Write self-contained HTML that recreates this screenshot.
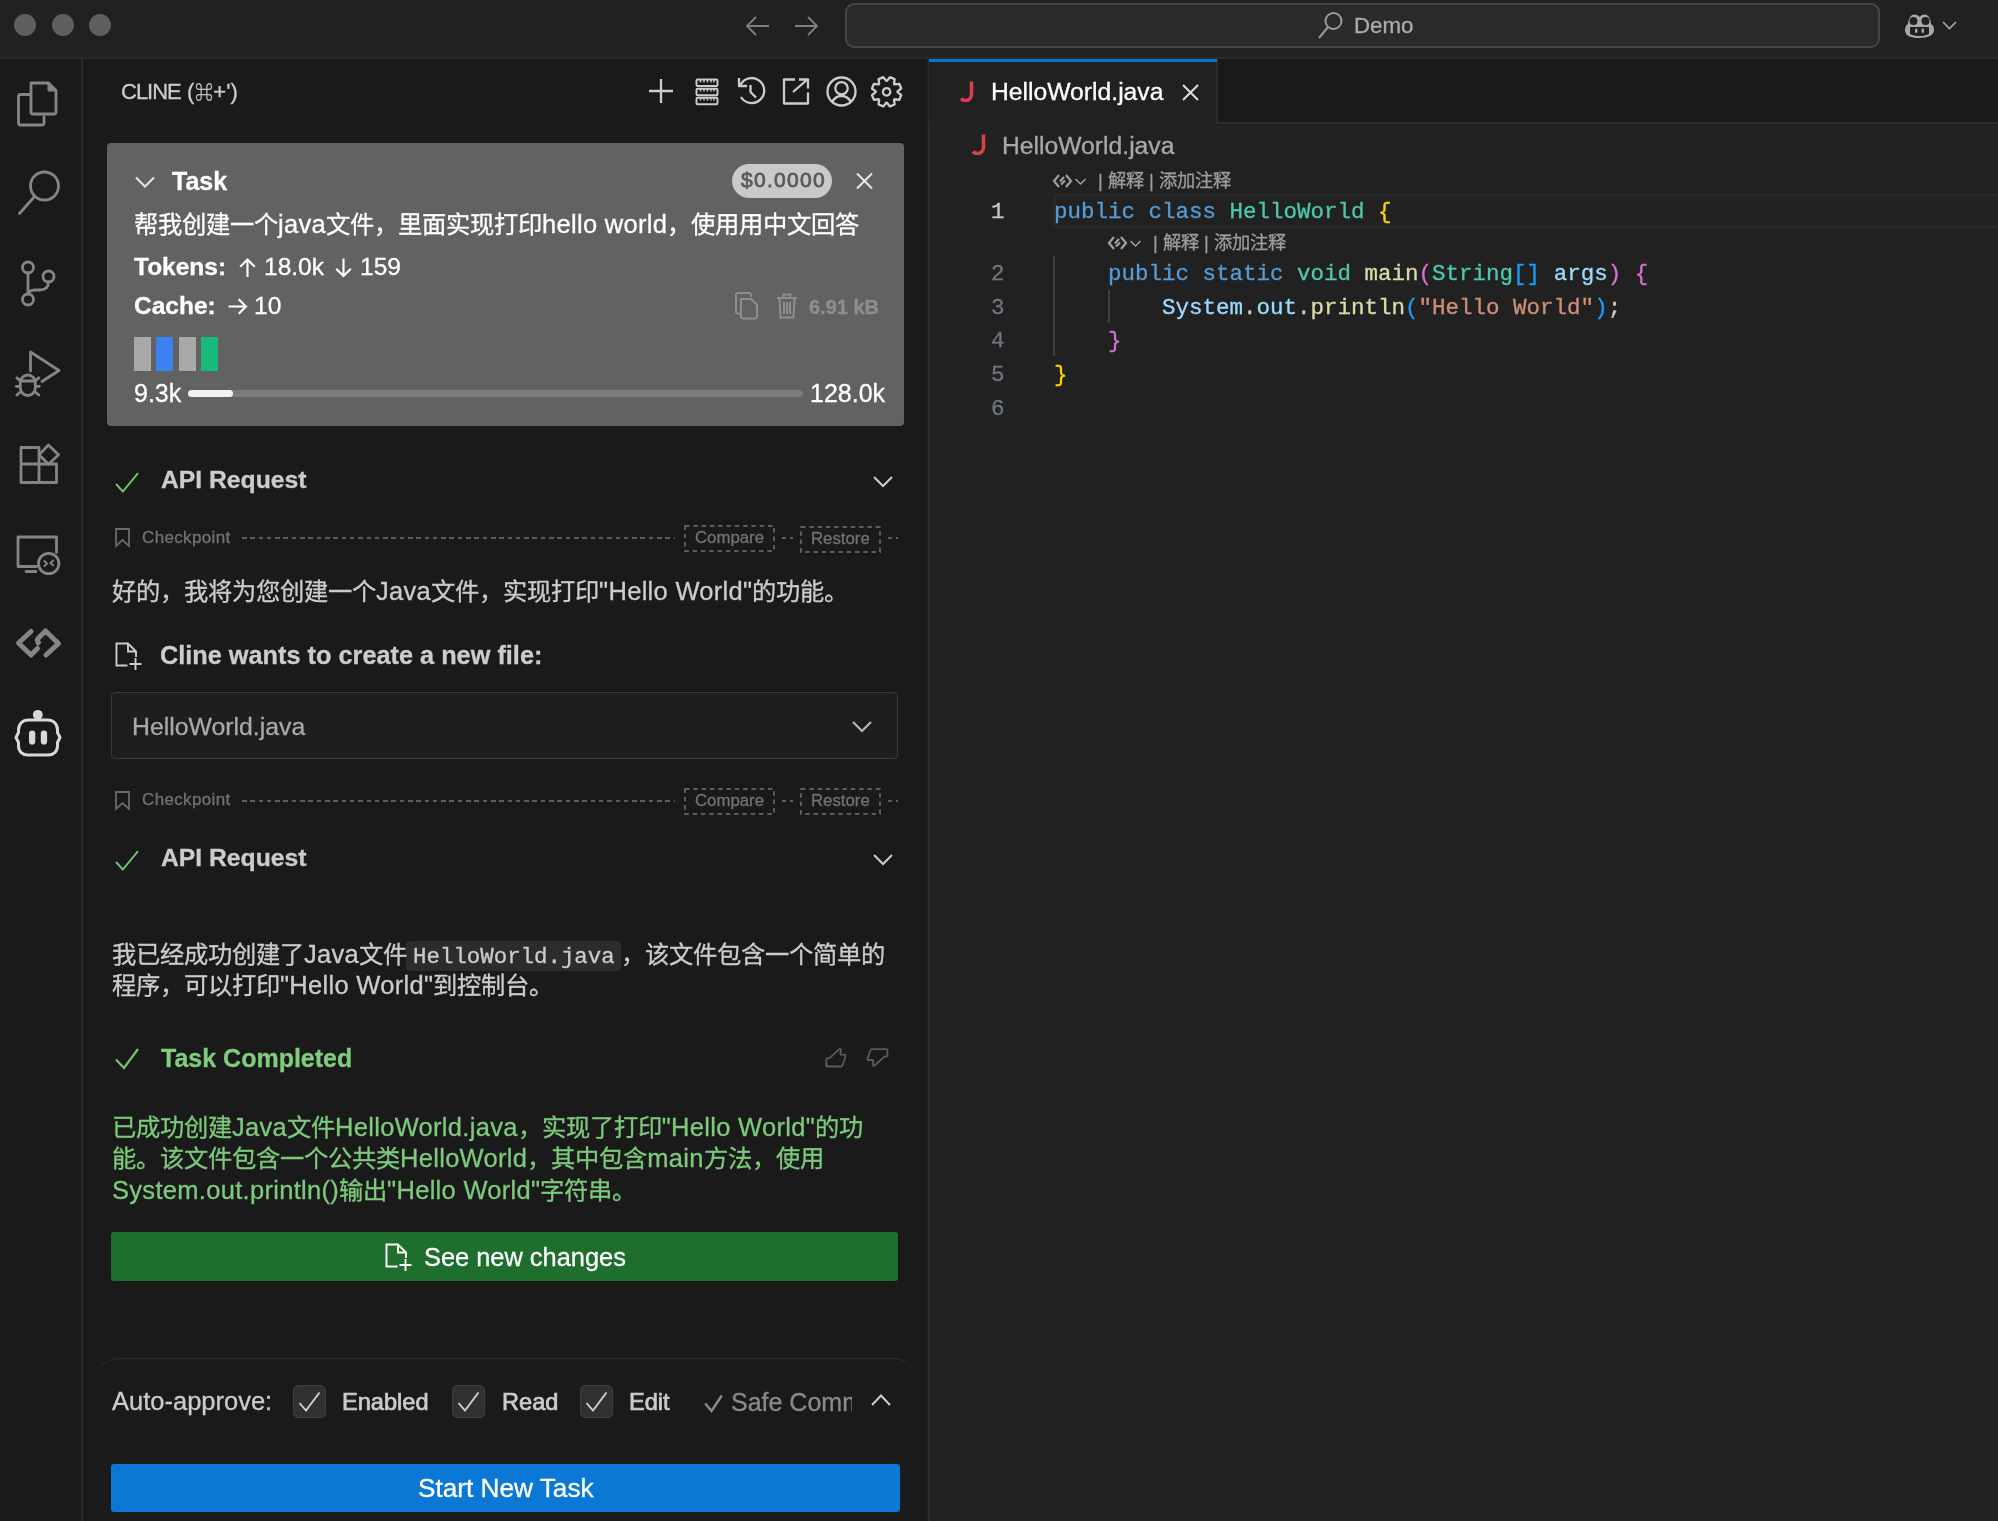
<!DOCTYPE html>
<html lang="zh-CN"><head><meta charset="utf-8">
<style>
*{margin:0;padding:0;box-sizing:border-box}
html,body{width:1998px;height:1521px;overflow:hidden;background:#212121}
body{position:relative;font-family:"Liberation Sans",sans-serif;color:#cccccc}
.a{position:absolute}
.t{position:absolute;white-space:pre;line-height:1;-webkit-text-stroke:0.3px currentColor;will-change:transform}
.mono{font-family:"Liberation Mono",monospace}
svg{position:absolute;overflow:visible}
</style></head><body>

<div class="a" style="left:0px;top:0px;width:1998px;height:57px;background:#212121;"></div>
<div class="a" style="left:0px;top:57px;width:1998px;height:2px;background:#2b2b2b;"></div>
<div class="a" style="left:14px;top:14px;width:22px;height:22px;border-radius:50%;background:#5f5f5f"></div>
<div class="a" style="left:51.5px;top:14px;width:22px;height:22px;border-radius:50%;background:#5f5f5f"></div>
<div class="a" style="left:89px;top:14px;width:22px;height:22px;border-radius:50%;background:#5f5f5f"></div>
<svg style="left:745px;top:15px" width="26" height="22" viewBox="0 0 26 22"><path d="M24 11H2M11 2L2 11l9 9" fill="none" stroke="#808080" stroke-width="1.8"/></svg>
<svg style="left:793px;top:15px" width="26" height="22" viewBox="0 0 26 22"><path d="M2 11h22M15 2l9 9-9 9" fill="none" stroke="#808080" stroke-width="1.8"/></svg>
<div class="a" style="left:845px;top:3px;width:1035px;height:45px;border:2px solid #464646;border-radius:9px;background:#2a2a2a"></div>
<svg style="left:1318px;top:12px" width="25" height="27" viewBox="0 0 25 27"><circle cx="15.5" cy="9" r="8" fill="none" stroke="#9a9a9a" stroke-width="2"/><path d="M10 15L1 26" stroke="#9a9a9a" stroke-width="2"/></svg>
<div class="t" style="left:1353.5px;top:15.1px;font-size:22.3px;color:#ababab;">Demo</div>
<svg style="left:1904px;top:12px" width="31" height="27" viewBox="0 0 31 27"><path d="M4 12c0-3 1-5 2-7 2-3 5-3 7-2 1 1 2 1 2.5 2 .5-1 1.5-1 2.5-2 2-1 5-1 7 2 1 2 2 4 2 7 2 1 3 3 3 6 0 5-6 8-14.5 8S1 24 1 18c0-3 1-5 3-6z" fill="#a8a8a8"/><ellipse cx="9.5" cy="9" rx="4" ry="4" fill="#212121"/><ellipse cx="21.5" cy="9" rx="4" ry="4" fill="#212121"/><path d="M6 15h19v7c-3 1.5-6 2-9.5 2S9 23.5 6 22z" fill="#212121"/><rect x="11" y="16.5" width="2.4" height="4.5" rx="1.2" fill="#a8a8a8"/><rect x="17.6" y="16.5" width="2.4" height="4.5" rx="1.2" fill="#a8a8a8"/></svg>
<svg style="left:1942px;top:21px" width="15" height="9" viewBox="0 0 15 9"><path d="M1 1l6.5 6.5L14 1" fill="none" stroke="#a8a8a8" stroke-width="1.6"/></svg>
<div class="a" style="left:0px;top:59px;width:81px;height:1462px;background:#1a1a1a;"></div>
<div class="a" style="left:81px;top:59px;width:2px;height:1462px;background:#2b2b2b;"></div>
<svg style="left:0;top:0" width="82" height="800" viewBox="0 0 82 800"><path d="M31 83h17.5l7.5 7.5V112a2 2 0 0 1-2 2H33a2 2 0 0 1-2-2z" fill="none" stroke="#858585" stroke-width="2.8" stroke-linejoin="round" stroke-linecap="round"/><path d="M48.5 83v7.5h7.5z" fill="#858585" stroke="#858585" stroke-width="2" stroke-linejoin="round"/><path d="M31 94.5H20.5a2 2 0 0 0-2 2V123a2 2 0 0 0 2 2H42a2 2 0 0 0 2-2v-6.5" fill="none" stroke="#858585" stroke-width="2.8" stroke-linejoin="round" stroke-linecap="round"/><circle cx="44.5" cy="186" r="14" fill="none" stroke="#858585" stroke-width="2.8" stroke-linejoin="round" stroke-linecap="round"/><path d="M34.5 196.5L19.5 213.5" fill="none" stroke="#858585" stroke-width="2.8" stroke-linejoin="round" stroke-linecap="round"/><circle cx="28" cy="267.5" r="5.5" fill="none" stroke="#858585" stroke-width="2.8" stroke-linejoin="round" stroke-linecap="round"/><circle cx="28" cy="299.5" r="5.5" fill="none" stroke="#858585" stroke-width="2.8" stroke-linejoin="round" stroke-linecap="round"/><circle cx="48.5" cy="276.5" r="5.5" fill="none" stroke="#858585" stroke-width="2.8" stroke-linejoin="round" stroke-linecap="round"/><path d="M28 273v21 M48.5 282c0 5-3 8-9 8h-5c-4 0-6 2-6 4" fill="none" stroke="#858585" stroke-width="2.8" stroke-linejoin="round" stroke-linecap="round"/><path d="M30.5 371V352l28.5 18.5-17 11" fill="none" stroke="#858585" stroke-width="2.8" stroke-linejoin="round" stroke-linecap="round"/><path d="M20.3 382.5a7.5 7.5 0 0 1 15 0v5.5a7.5 7.5 0 0 1-15 0z M21 381h13.6 M16.3 386.3h3.8 M35.5 386.3h3.8 M16.8 377.8l3.6 3 M38.8 377.8l-3.6 3 M16.8 395l3.6-3 M38.8 395l-3.6-3" fill="none" stroke="#858585" stroke-width="2.8" stroke-linejoin="round" stroke-linecap="round"/><path d="M21 447.5h18v35H21z M21 464h35.5v18.5H39" fill="none" stroke="#858585" stroke-width="2.8" stroke-linejoin="round" stroke-linecap="round"/><path d="M48.4 445l10.2 9.7-10.2 9.5-9.3-9.5z" fill="none" stroke="#858585" stroke-width="2.8" stroke-linejoin="round" stroke-linecap="round"/><path d="M36.5 566.5H18V537H56.5V552.5 M26 571.5h10" fill="none" stroke="#858585" stroke-width="2.8" stroke-linejoin="round" stroke-linecap="round"/><circle cx="48.7" cy="563.5" r="10.2" fill="none" stroke="#858585" stroke-width="2.8" stroke-linejoin="round" stroke-linecap="round"/><path d="M43.8 560.5l3.3 3-3.3 3 M53.8 560l-3.3 3 3.3 3" fill="none" stroke="#858585" stroke-width="1.8"/><path d="M31 631.5l-12.5 11.5 12.5 12 M45.5 631l13 12.5-12.5 11.5 M45.5 631l-7 7c-1.5 1.5-1.5 3 0 4.5l-0.5 0.5 M31 655l6.5-6.5" fill="none" stroke="#858585" stroke-width="5" stroke-linejoin="round" stroke-linecap="round"/><circle cx="37.8" cy="714.8" r="4.9" fill="#d8d8d8"/><path d="M28.5 720h19c6 0 10 4 10 10v2.5l2.5 5-2.5 5v3.5c0 5.5-4 9-9.5 9h-20c-5.5 0-9.5-3.5-9.5-9v-3.5l-2.5-5 2.5-5V730c0-6 4-10 10-10z" fill="none" stroke="#d8d8d8" stroke-width="3" stroke-linejoin="round"/><rect x="29" y="730.5" width="6.3" height="14" rx="3.1" fill="#d8d8d8"/><rect x="40.8" y="730.5" width="6.3" height="14" rx="3.1" fill="#d8d8d8"/></svg>
<div class="a" style="left:83px;top:59px;width:844px;height:1462px;background:#1a1a1a;"></div>
<div class="a" style="left:928px;top:59px;width:2px;height:1462px;background:#2b2b2b;"></div>
<div class="t" style="left:121.0px;top:81.1px;font-size:22px;color:#cccccc;letter-spacing:0.2px;"><span style="letter-spacing:-1px">CLINE</span> (<span style="font-size:18px;letter-spacing:0.5px">⌘</span>+')</div>
<svg style="left:0;top:0" width="930" height="130" viewBox="0 0 930 130"><path d="M661 79v24 M649 91h24" fill="none" stroke="#cccccc" stroke-width="2.3" stroke-linejoin="round"/><rect x="696.5" y="79.5" width="21" height="6.5" rx="1" fill="none" stroke="#cccccc" stroke-width="1.9"/><rect x="696.5" y="88.7" width="21" height="6.5" rx="1" fill="none" stroke="#cccccc" stroke-width="1.9"/><rect x="696.5" y="97.8" width="21" height="6.5" rx="1" fill="none" stroke="#cccccc" stroke-width="1.9"/><path d="M700.5 80v2.5M704 80v2.5M707.5 80v2.5M711 80v2.5M714 80v2.5 M700.5 89v2.5M704 89v2.5M707.5 89v2.5M711 89v2.5M714 89v2.5 M700.5 98v2.5M704 98v2.5M707.5 98v2.5M711 98v2.5M714 98v2.5" stroke="#cccccc" stroke-width="1.4"/><path d="M740.5 85a12.5 12.5 0 1 1 0.5 12" fill="none" stroke="#cccccc" stroke-width="2.3" stroke-linejoin="round"/><path d="M739 78v8h8" fill="none" stroke="#cccccc" stroke-width="2.3" stroke-linejoin="round"/><path d="M750.5 85v7l5.5 5.5" fill="none" stroke="#cccccc" stroke-width="2.3" stroke-linejoin="round"/><path d="M795 79.5h-11v24h24v-11 M793 92l15-13 M799 79.5h9v9" fill="none" stroke="#cccccc" stroke-width="2.3" stroke-linejoin="round"/><circle cx="841.5" cy="91.5" r="14" fill="none" stroke="#cccccc" stroke-width="2.3" stroke-linejoin="round"/><circle cx="841.5" cy="88.3" r="6.2" fill="none" stroke="#cccccc" stroke-width="2.3" stroke-linejoin="round"/><path d="M832 102.5c2-4.5 5.5-6.5 9.5-6.5s7.5 2 9.5 6.5" fill="none" stroke="#cccccc" stroke-width="2.3" stroke-linejoin="round"/><g transform="translate(886.6 91.8) rotate(22.5)"><path d="M10.20 -3.84 L14.78 -2.54 L14.78 2.54 L10.20 3.84 L9.93 4.50 L12.25 8.66 L8.66 12.25 L4.50 9.93 L3.84 10.20 L2.54 14.78 L-2.54 14.78 L-3.84 10.20 L-4.50 9.93 L-8.66 12.25 L-12.25 8.66 L-9.93 4.50 L-10.20 3.84 L-14.78 2.54 L-14.78 -2.54 L-10.20 -3.84 L-9.93 -4.50 L-12.25 -8.66 L-8.66 -12.25 L-4.50 -9.93 L-3.84 -10.20 L-2.54 -14.78 L2.54 -14.78 L3.84 -10.20 L4.50 -9.93 L8.66 -12.25 L12.25 -8.66 L9.93 -4.50Z" fill="none" stroke="#cccccc" stroke-width="2.3" stroke-linejoin="round"/><circle cx="0" cy="0" r="3.7" fill="none" stroke="#cccccc" stroke-width="2.3" stroke-linejoin="round"/></g></svg>
<div class="a" style="left:107px;top:143px;width:797px;height:283px;background:#626262;border-radius:4px"></div>
<svg style="left:135px;top:176px" width="20" height="12" viewBox="0 0 20 12"><path d="M1 1.5l9 9 9-9" fill="none" stroke="#e8e8e8" stroke-width="2"/></svg>
<div class="t" style="left:172.0px;top:168.8px;font-size:25px;color:#ffffff;font-weight:bold;">Task</div>
<div class="a" style="left:732px;top:164px;width:100px;height:34px;border-radius:17px;background:#c9c9c9"></div>
<div class="t" style="left:740.5px;top:168.5px;font-size:21px;color:#5a5a5a;letter-spacing:1.3px;-webkit-text-stroke:0.8px #5a5a5a;">$0.0000</div>
<svg style="left:856px;top:173px" width="17" height="16" viewBox="0 0 17 16"><path d="M1 0.5l15 15M16 0.5l-15 15" stroke="#e8e8e8" stroke-width="2"/></svg>
<div class="t" style="left:134.4px;top:212.4px;font-size:25.5px;color:#ffffff;letter-spacing:0.3px;"><span style="font-size:24.3px;letter-spacing:0">帮我创建一个</span>java<span style="font-size:24.3px;letter-spacing:0">文件，里面实现打印</span>hello world<span style="font-size:24.3px;letter-spacing:0">，使用用中文回答</span></div>
<div class="t" style="left:134.4px;top:255.1px;font-size:24.5px;color:#ffffff;font-weight:bold;">Tokens:</div>
<svg style="left:238.5px;top:258px" width="17" height="20" viewBox="0 0 17 20"><path d="M8.5 1.5V19 M1.2 8.8L8.5 1.5l7.3 7.3" fill="none" stroke="#ffffff" stroke-width="2.1"/></svg>
<div class="t" style="left:264.0px;top:255.1px;font-size:24.5px;color:#ffffff;">18.0k</div>
<svg style="left:334.5px;top:258px" width="17" height="20" viewBox="0 0 17 20"><path d="M8.5 0.5V18 M1.2 10.7L8.5 18l7.3-7.3" fill="none" stroke="#ffffff" stroke-width="2.1"/></svg>
<div class="t" style="left:359.5px;top:255.1px;font-size:24.5px;color:#ffffff;">159</div>
<div class="t" style="left:134.4px;top:294.1px;font-size:24.5px;color:#ffffff;font-weight:bold;">Cache:</div>
<svg style="left:227.5px;top:297.5px" width="19" height="17" viewBox="0 0 19 17"><path d="M0.5 8.5H18 M10.7 1.2L18 8.5l-7.3 7.3" fill="none" stroke="#ffffff" stroke-width="2.1"/></svg>
<div class="t" style="left:254.0px;top:294.1px;font-size:24.5px;color:#ffffff;">10</div>
<svg style="left:735px;top:292px" width="24" height="27" viewBox="0 0 24 27"><path d="M6 21.5H3a2 2 0 0 1-2-2V3a2 2 0 0 1 2-2h11a2 2 0 0 1 2 2v2" fill="none" stroke="#8e8e8e" stroke-width="2"/><path d="M6 7h10l6 6v11.5a2 2 0 0 1-2 2H8a2 2 0 0 1-2-2z" fill="none" stroke="#8e8e8e" stroke-width="2"/></svg>
<svg style="left:776px;top:292px" width="22" height="27" viewBox="0 0 22 27"><path d="M1 6h20 M7.5 6V2.5h7V6 M3.5 6l1 19.5h13l1-19.5 M8 10v12 M11 10v12 M14 10v12" fill="none" stroke="#8e8e8e" stroke-width="2"/></svg>
<div class="t" style="left:809.0px;top:296.6px;font-size:20px;color:#8e8e8e;font-weight:bold;">6.91 kB</div>
<div class="a" style="left:133.6px;top:337px;width:17px;height:34px;background:#a9a9a9;"></div>
<div class="a" style="left:156px;top:337px;width:17px;height:34px;background:#3c82f3;"></div>
<div class="a" style="left:178.6px;top:337px;width:17px;height:34px;background:#a9a9a9;"></div>
<div class="a" style="left:201px;top:337px;width:17px;height:34px;background:#19b97e;"></div>
<div class="t" style="left:134.4px;top:381.4px;font-size:25px;color:#ffffff;">9.3k</div>
<div class="a" style="left:188px;top:389.5px;width:615px;height:7.5px;border-radius:4px;background:#7b7b7b"></div>
<div class="a" style="left:188px;top:389.5px;width:45px;height:7.5px;border-radius:4px;background:#f2f2f2"></div>
<div class="t" style="left:810.0px;top:381.4px;font-size:25px;color:#ffffff;">128.0k</div>
<svg style="left:114.5px;top:471.5px" width="24" height="21" viewBox="0 0 24 21"><path d="M1 12l6.8 7.5L23 1.2" fill="none" stroke="#73c46f" stroke-width="1.9"/></svg>
<div class="t" style="left:160.8px;top:468.4px;font-size:24.7px;color:#cccccc;font-weight:bold;">API Request</div>
<svg style="left:873px;top:476px" width="20" height="11" viewBox="0 0 20 11"><path d="M1 1l9 9 9-9" fill="none" stroke="#cccccc" stroke-width="2"/></svg>
<svg style="left:115px;top:528px" width="15" height="19" viewBox="0 0 15 19"><path d="M1 1h13v17l-6.5-6-6.5 6z" fill="none" stroke="#6a6a6a" stroke-width="1.8"/></svg>
<div class="t" style="left:142.0px;top:528.9px;font-size:17px;color:#737373;letter-spacing:0.35px;">Checkpoint</div>
<div class="a" style="left:242px;top:537.2px;width:433px;height:2px;background:repeating-linear-gradient(90deg,#5c5c5c 0 4.5px,transparent 4.5px 8.3px)"></div>
<svg style="left:683.5px;top:525px" width="91" height="27" viewBox="0 0 91 27"><rect x="1" y="1" width="89" height="25" fill="none" stroke="#5c5c5c" stroke-width="2" stroke-dasharray="4.5 3.8"/></svg>
<div class="t" style="left:695.0px;top:530.0px;font-size:16.8px;color:#737373;">Compare</div>
<div class="a" style="left:782px;top:537.2px;width:11px;height:2px;background:repeating-linear-gradient(90deg,#5c5c5c 0 4.5px,transparent 4.5px 8.3px)"></div>
<svg style="left:799.5px;top:525.5px" width="81" height="27" viewBox="0 0 81 27"><rect x="1" y="1" width="79" height="25" fill="none" stroke="#5c5c5c" stroke-width="2" stroke-dasharray="4.5 3.8"/></svg>
<div class="t" style="left:811.0px;top:530.5px;font-size:16.8px;color:#737373;">Restore</div>
<div class="a" style="left:888px;top:537.2px;width:10px;height:2px;background:repeating-linear-gradient(90deg,#5c5c5c 0 4.5px,transparent 4.5px 8.3px)"></div>
<div class="t" style="left:112.0px;top:578.7px;font-size:25.5px;color:#cccccc;letter-spacing:0.3px;"><span style="font-size:24.3px;letter-spacing:0">好的，我将为您创建一个</span>Java<span style="font-size:24.3px;letter-spacing:0">文件，实现打印</span>"Hello World"<span style="font-size:24.3px;letter-spacing:0">的功能。</span></div>
<svg style="left:115px;top:642px" width="28" height="29" viewBox="0 0 28 29"><path d="M12.5 23.5H1.5V1.5H13l8 8V15 M13 1.5v8h8 M20.5 16v12 M14.5 22h12" fill="none" stroke="#cccccc" stroke-width="1.9"/></svg>
<div class="t" style="left:160.3px;top:642.6px;font-size:25.3px;color:#cccccc;font-weight:bold;">Cline wants to create a new file:</div>
<div class="a" style="left:111px;top:692px;width:787px;height:67px;border:1.5px solid #393939;border-radius:4px;background:#1e1e1e"></div>
<div class="t" style="left:132.0px;top:715.0px;font-size:24.8px;color:#a9a9a9;">HelloWorld.java</div>
<svg style="left:852px;top:721px" width="20" height="11" viewBox="0 0 20 11"><path d="M1 1l9 9 9-9" fill="none" stroke="#bbbbbb" stroke-width="2"/></svg>
<svg style="left:115px;top:790.5px" width="15" height="19" viewBox="0 0 15 19"><path d="M1 1h13v17l-6.5-6-6.5 6z" fill="none" stroke="#6a6a6a" stroke-width="1.8"/></svg>
<div class="t" style="left:142.0px;top:791.4px;font-size:17px;color:#737373;letter-spacing:0.35px;">Checkpoint</div>
<div class="a" style="left:242px;top:799.7px;width:433px;height:2px;background:repeating-linear-gradient(90deg,#5c5c5c 0 4.5px,transparent 4.5px 8.3px)"></div>
<svg style="left:683.5px;top:787.5px" width="91" height="27" viewBox="0 0 91 27"><rect x="1" y="1" width="89" height="25" fill="none" stroke="#5c5c5c" stroke-width="2" stroke-dasharray="4.5 3.8"/></svg>
<div class="t" style="left:695.0px;top:792.5px;font-size:16.8px;color:#737373;">Compare</div>
<div class="a" style="left:782px;top:799.7px;width:11px;height:2px;background:repeating-linear-gradient(90deg,#5c5c5c 0 4.5px,transparent 4.5px 8.3px)"></div>
<svg style="left:799.5px;top:788.0px" width="81" height="27" viewBox="0 0 81 27"><rect x="1" y="1" width="79" height="25" fill="none" stroke="#5c5c5c" stroke-width="2" stroke-dasharray="4.5 3.8"/></svg>
<div class="t" style="left:811.0px;top:793.0px;font-size:16.8px;color:#737373;">Restore</div>
<div class="a" style="left:888px;top:799.7px;width:10px;height:2px;background:repeating-linear-gradient(90deg,#5c5c5c 0 4.5px,transparent 4.5px 8.3px)"></div>
<svg style="left:114.5px;top:849.5px" width="24" height="21" viewBox="0 0 24 21"><path d="M1 12l6.8 7.5L23 1.2" fill="none" stroke="#73c46f" stroke-width="1.9"/></svg>
<div class="t" style="left:160.8px;top:846.4px;font-size:24.7px;color:#cccccc;font-weight:bold;">API Request</div>
<svg style="left:873px;top:854px" width="20" height="11" viewBox="0 0 20 11"><path d="M1 1l9 9 9-9" fill="none" stroke="#cccccc" stroke-width="2"/></svg>
<div class="a" style="left:406px;top:941px;width:215px;height:30px;border-radius:4px;background:#2a2c2e"></div>
<div class="t" style="left:112.0px;top:942.4px;font-size:25.5px;color:#cccccc;letter-spacing:0.3px;"><span style="font-size:24.3px;letter-spacing:0">我已经成功创建了</span>Java<span style="font-size:24.3px;letter-spacing:0">文件</span><span class="mono" style="font-size:22.4px;letter-spacing:0;padding:0 6px">HelloWorld.java</span><span style="font-size:24.3px;letter-spacing:0">，该文件包含一个简单的</span></div>
<div class="t" style="left:112.0px;top:973.4px;font-size:25.5px;color:#cccccc;letter-spacing:0.3px;"><span style="font-size:24.3px;letter-spacing:0">程序，可以打印</span>"Hello World"<span style="font-size:24.3px;letter-spacing:0">到控制台。</span></div>
<svg style="left:115px;top:1048px" width="24" height="21" viewBox="0 0 24 21"><path d="M1 11.5l8 8.5L23 1" fill="none" stroke="#73c46f" stroke-width="2.2"/></svg>
<div class="t" style="left:161.0px;top:1045.7px;font-size:25px;color:#7fcc7e;font-weight:bold;">Task Completed</div>
<svg style="left:0;top:0" width="900" height="1100" viewBox="0 0 900 1100"><path d="M826.3 1066.3V1059.2Q826.3 1058.1 827.5 1058.1H829.6L839.3 1049.2Q840.6 1048.2 841 1050L840.3 1053.8Q840.2 1054.6 841 1054.6H844.3Q846 1054.8 845.5 1056.5L842.5 1065.4Q842.1 1066.5 840.8 1066.5H827.5Q826.3 1066.5 826.3 1065.3Z" fill="none" stroke="#5c5c5c" stroke-width="1.8" stroke-linejoin="round"/><path d="M871.6 1049.1H886.2Q887.4 1049.1 887.4 1050.3V1055.4Q887.4 1056.6 886.2 1056.6H884.4L874.6 1065.5Q873.2 1066.6 872.9 1064.8L873.3 1061Q873.4 1060 872.5 1060H868.7Q867 1059.9 867.5 1058.2L870.5 1050.2Q870.9 1049.1 871.6 1049.1Z" fill="none" stroke="#5c5c5c" stroke-width="1.8" stroke-linejoin="round"/></svg>
<div class="t" style="left:112.0px;top:1115.4px;font-size:25.5px;color:#7dca7c;letter-spacing:0.3px;"><span style="font-size:24.3px;letter-spacing:0">已成功创建</span>Java<span style="font-size:24.3px;letter-spacing:0">文件</span>HelloWorld.java<span style="font-size:24.3px;letter-spacing:0">，实现了打印</span>"Hello World"<span style="font-size:24.3px;letter-spacing:0">的功</span></div>
<div class="t" style="left:112.0px;top:1146.4px;font-size:25.5px;color:#7dca7c;letter-spacing:0.3px;"><span style="font-size:24.3px;letter-spacing:0">能。该文件包含一个公共类</span>HelloWorld<span style="font-size:24.3px;letter-spacing:0">，其中包含</span>main<span style="font-size:24.3px;letter-spacing:0">方法，使用</span></div>
<div class="t" style="left:112.0px;top:1178.4px;font-size:25.5px;color:#7dca7c;letter-spacing:0.3px;">System.out.println()<span style="font-size:24.3px;letter-spacing:0">输出</span>"Hello World"<span style="font-size:24.3px;letter-spacing:0">字符串。</span></div>
<div class="a" style="left:111px;top:1232px;width:787px;height:49px;border-radius:3px;background:#1e6e2d"></div>
<svg style="left:385px;top:1243px" width="28" height="29" viewBox="0 0 28 29"><path d="M12.5 23.5H1.5V1.5H13l8 8V15 M13 1.5v8h8 M20.5 16v12 M14.5 22h12" fill="none" stroke="#ffffff" stroke-width="1.9"/></svg>
<div class="t" style="left:424.0px;top:1245.1px;font-size:25.4px;color:#ffffff;">See new changes</div>
<div class="a" style="left:93px;top:1358px;width:826px;height:200px;border-top:1.5px solid #2e2e2e;border-radius:26px 26px 0 0;background:#1a1a1a"></div>
<div class="t" style="left:112.0px;top:1389.4px;font-size:25.5px;color:#cccccc;">Auto-approve:</div>
<div class="a" style="left:293px;top:1385px;width:33px;height:33px;border:1.5px solid #3e3e3e;border-radius:5px;background:#313131"></div>
<svg style="left:298px;top:1391px" width="23" height="21" viewBox="0 0 23 21"><path d="M1.5 12l6.5 7.5L21.5 1.5" fill="none" stroke="#d0d0d0" stroke-width="1.9"/></svg>
<div class="a" style="left:452px;top:1385px;width:33px;height:33px;border:1.5px solid #3e3e3e;border-radius:5px;background:#313131"></div>
<svg style="left:457px;top:1391px" width="23" height="21" viewBox="0 0 23 21"><path d="M1.5 12l6.5 7.5L21.5 1.5" fill="none" stroke="#d0d0d0" stroke-width="1.9"/></svg>
<div class="a" style="left:580px;top:1385px;width:33px;height:33px;border:1.5px solid #3e3e3e;border-radius:5px;background:#313131"></div>
<svg style="left:585px;top:1391px" width="23" height="21" viewBox="0 0 23 21"><path d="M1.5 12l6.5 7.5L21.5 1.5" fill="none" stroke="#d0d0d0" stroke-width="1.9"/></svg>
<div class="t" style="left:341.6px;top:1391.0px;font-size:23.6px;color:#cccccc;-webkit-text-stroke:0.7px #cccccc;">Enabled</div>
<div class="t" style="left:501.8px;top:1391.0px;font-size:23.6px;color:#cccccc;-webkit-text-stroke:0.7px #cccccc;">Read</div>
<div class="t" style="left:629.3px;top:1391.0px;font-size:23.6px;color:#cccccc;-webkit-text-stroke:0.7px #cccccc;">Edit</div>
<svg style="left:704px;top:1394px" width="19" height="19" viewBox="0 0 19 19"><path d="M1.2 9.5l6.3 7.5L17.8 1.5" fill="none" stroke="#8a8a8a" stroke-width="2.4"/></svg>
<div class="a" style="left:725px;top:1380px;width:127px;height:40px;overflow:hidden">
<div class="t" style="left:6.3px;top:9.8px;font-size:25px;color:#8a8a8a;">Safe Commands</div>
</div>
<svg style="left:871px;top:1394px" width="20" height="12" viewBox="0 0 20 12"><path d="M1 11l9-9.5 9 9.5" fill="none" stroke="#cccccc" stroke-width="2"/></svg>
<div class="a" style="left:111px;top:1464px;width:789px;height:48px;border-radius:3px;background:#0a78d4"></div>
<div class="t" style="left:418.0px;top:1475.1px;font-size:26.2px;color:#ffffff;">Start New Task</div>
<div class="a" style="left:929px;top:59px;width:1069px;height:64px;background:#1a1a1a;"></div>
<div class="a" style="left:929px;top:122px;width:1069px;height:2px;background:#2b2b2b;"></div>
<div class="a" style="left:929px;top:59px;width:289px;height:65px;background:#212121;border-right:2px solid #2b2b2b"></div>
<div class="a" style="left:929px;top:59px;width:288px;height:2.5px;background:#0078d4;"></div>
<svg style="left:960.2px;top:80px" width="16" height="22" viewBox="0 0 16 22"><path d="M11.5 1.5v12.5c0 4-2.5 6.5-6 6.5-2 0-3.5-.8-4.5-2" fill="none" stroke="#d6404d" stroke-width="3.6" stroke-linecap="butt"/></svg>
<div class="t" style="left:990.5px;top:80.3px;font-size:24.7px;color:#ffffff;">HelloWorld.java</div>
<svg style="left:1182px;top:84px" width="17" height="17" viewBox="0 0 17 17"><path d="M1 1l15 15M16 1L1 16" stroke="#dddddd" stroke-width="2"/></svg>
<svg style="left:971.5px;top:133.2px" width="16" height="22" viewBox="0 0 16 22"><path d="M11.5 1.5v12.5c0 4-2.5 6.5-6 6.5-2 0-3.5-.8-4.5-2" fill="none" stroke="#d6404d" stroke-width="3.6" stroke-linecap="butt"/></svg>
<div class="t" style="left:1002.0px;top:134.4px;font-size:24.7px;color:#a9a9a9;">HelloWorld.java</div>
<svg style="left:1053px;top:173px" width="36" height="16" viewBox="0 0 36 16"><path d="M6 2L1 8l5 6 M13 2l5 6-5 6 M11 4l-4 4.5 M8 11.5l4-4" fill="none" stroke="#a0a0a0" stroke-width="2.2"/><path d="M22.5 6l5 5 5-5" fill="none" stroke="#a0a0a0" stroke-width="1.5"/></svg>
<div class="t" style="left:1098.0px;top:171.5px;font-size:18.3px;color:#9d9d9d;">| 解释 | 添加注释</div>
<div class="a" style="left:1053px;top:194px;width:945px;height:33.5px;border:3px solid #282828;border-right:none"></div>
<svg style="left:1108px;top:235px" width="36" height="16" viewBox="0 0 36 16"><path d="M6 2L1 8l5 6 M13 2l5 6-5 6 M11 4l-4 4.5 M8 11.5l4-4" fill="none" stroke="#a0a0a0" stroke-width="2.2"/><path d="M22.5 6l5 5 5-5" fill="none" stroke="#a0a0a0" stroke-width="1.5"/></svg>
<div class="t" style="left:1153.0px;top:233.5px;font-size:18.3px;color:#9d9d9d;">| 解释 | 添加注释</div>
<div class="t mono" style="left:991.0px;top:200.6px;font-size:22.5px;color:#cccccc;">1</div>
<div class="t mono" style="left:991.0px;top:262.6px;font-size:22.5px;color:#6e7681;">2</div>
<div class="t mono" style="left:991.0px;top:296.6px;font-size:22.5px;color:#6e7681;">3</div>
<div class="t mono" style="left:991.0px;top:330.2px;font-size:22.5px;color:#6e7681;">4</div>
<div class="t mono" style="left:991.0px;top:364.2px;font-size:22.5px;color:#6e7681;">5</div>
<div class="t mono" style="left:991.0px;top:397.5px;font-size:22.5px;color:#6e7681;">6</div>
<div class="t mono" style="left:1054.0px;top:200.6px;font-size:22.5px;color:#cccccc;"><span style="color:#569cd6">public class </span><span style="color:#4ec9b0">HelloWorld </span><span style="color:#ffd700">{</span></div>
<div class="t mono" style="left:1108.0px;top:262.6px;font-size:22.5px;color:#cccccc;"><span style="color:#569cd6">public static </span><span style="color:#4ec9b0">void </span><span style="color:#dcdcaa">main</span><span style="color:#da70d6">(</span><span style="color:#4ec9b0">String</span><span style="color:#179fff">[]</span><span style="color:#cccccc"> </span><span style="color:#9cdcfe">args</span><span style="color:#da70d6">)</span><span style="color:#cccccc"> </span><span style="color:#da70d6">{</span></div>
<div class="t mono" style="left:1162.0px;top:296.6px;font-size:22.5px;color:#cccccc;"><span style="color:#9cdcfe">System</span><span style="color:#cccccc">.</span><span style="color:#9cdcfe">out</span><span style="color:#cccccc">.</span><span style="color:#dcdcaa">println</span><span style="color:#179fff">(</span><span style="color:#ce9178">"Hello World"</span><span style="color:#179fff">)</span><span style="color:#cccccc">;</span></div>
<div class="t mono" style="left:1108.0px;top:330.2px;font-size:22.5px;color:#cccccc;"><span style="color:#da70d6">}</span></div>
<div class="t mono" style="left:1054.0px;top:364.2px;font-size:22.5px;color:#cccccc;"><span style="color:#ffd700">}</span></div>
<div class="a" style="left:1053px;top:256px;width:2px;height:100px;background:#404040;"></div>
<div class="a" style="left:1108px;top:290px;width:2px;height:33px;background:#404040;"></div>
</body></html>
